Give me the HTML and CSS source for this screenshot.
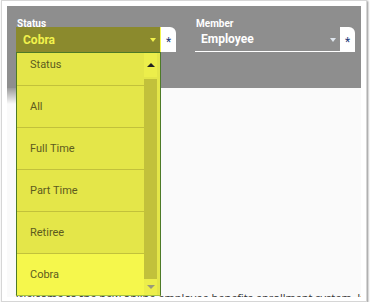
FILE: index.html
```html
<!DOCTYPE html>
<html lang="en">
<head>
    <meta charset="UTF-8">
    <meta name="viewport" content="width=device-width, initial-scale=1.0">
    <title>Enrollment</title>
    <link rel="stylesheet" href="styles.css">
</head>
<body>

<div class="frame">
    <div class="screen">

        <!-- filter bar -->
        <div class="filters">
            <div class="field">
                <label>Status</label>
                <div class="select-row">
                    <div class="select open">
                        <span class="value">Cobra</span>
                        <span class="caret"></span>
                    </div>
                    <span class="required">*</span>
                </div>

                <!-- open dropdown -->
                <div class="dropdown">
                    <div class="options">
                        <div class="option">Status</div>
                        <div class="option">All</div>
                        <div class="option">Full Time</div>
                        <div class="option">Part Time</div>
                        <div class="option">Retiree</div>
                        <div class="option selected">Cobra</div>
                    </div>
                    <div class="scrollbar">
                        <div class="scroll-btn up"><span></span></div>
                        <div class="thumb"></div>
                        <div class="scroll-btn down"><span></span></div>
                    </div>
                </div>
            </div>

            <div class="field">
                <label>Member</label>
                <div class="select-row">
                    <div class="select">
                        <span class="value">Employee</span>
                        <span class="caret"></span>
                    </div>
                    <span class="required">*</span>
                </div>
            </div>
        </div>

        <div class="content">
            <p>Welcome to the new online employee benefits enrollment system. If you have questions</p>
        </div>

    </div>
</div>

</body>
</html>
```

FILE: styles.css
```css
body {
    margin: 0;
    background: #ffffff;
    font-family: Roboto, "Open Sans", Arial, sans-serif;
}
.frame {
    width: 366px;
    height: 302px;
    box-sizing: border-box;
    margin-left: 1px;
    padding: 5px;
    border: 1px solid #d6d6d6;
    background: #ffffff;
    box-shadow: 1px 1px 2px rgba(0,0,0,0.45);
}
.screen {
    height: 291px;
    background: #fafafa;
    overflow: hidden;
    position: relative;
}
.filters {
    height: 82px;
    box-sizing: border-box;
    background: #8e8e8e;
    padding: 13px 0 0 9px;
    display: flex;
    gap: 19px;
    position: relative;
}
/* fading shade left of the open list */
.filters::after {
    content: "";
    position: absolute;
    left: 0;
    top: 82px;
    width: 9px;
    height: 16px;
    background: linear-gradient(#9a9a9a, #fafafa);
}
.field {
    width: 160px;
    position: relative;
}
.field label {
    display: block;
    color: #ffffff;
    font-size: 10px;
    font-weight: bold;
    line-height: 9px;
    height: 8px;
    padding-left: 1px;
}
.select-row {
    display: flex;
    height: 25px;
}
.select {
    flex: 1;
    display: flex;
    align-items: center;
    justify-content: space-between;
    padding: 0 4px 0 6px;
    border-bottom: 1px solid #ffffff;
    color: #ffffff;
    font-size: 12px;
    font-weight: bold;
}
.select.open {
    background: #8b8a2d;
    color: #f2f24c;
    border-bottom: none;
    border-right: 1px solid #f4f64c;
    padding-left: 7px;
}
.caret {
    width: 0;
    height: 0;
    border-left: 3px solid transparent;
    border-right: 3px solid transparent;
    border-top: 4px solid #dfe6ee;
    margin-top: 1px;
}
.select.open .caret {
    border-top-color: #f2f24c;
}
.required {
    width: 15px;
    background: #ffffff;
    border-top-right-radius: 6px;
    color: #1c3b7a;
    font-size: 12px;
    text-align: center;
    line-height: 30px;
}
.dropdown {
    position: absolute;
    left: 0;
    top: 33px;
    width: 145px;
    height: 244px;
    box-sizing: border-box;
    border: 1px solid #4d7a27;
    border-bottom-color: #a6c23e;
    background: #e4e649;
    display: flex;
    padding-right: 3px;
    z-index: 2;
}
.options {
    flex: 1;
    overflow: hidden;
}
.option {
    height: 41px;
    margin-bottom: 1px;
    box-shadow: 0 1px 0 #c2c13b;
    padding-left: 13px;
    display: flex;
    align-items: center;
    color: #5d5b1e;
    font-size: 11px;
}
.option:first-child {
    margin-top: -9px;
}
.option.selected {
    background: #f5f74c;
    box-shadow: none;
}
.scrollbar {
    width: 13px;
    display: flex;
    flex-direction: column;
}
.scroll-btn {
    height: 24px;
    background: #ecee4b;
    display: flex;
    align-items: center;
    justify-content: center;
}
.scroll-btn.down {
    height: 16px;
}
.scroll-btn span {
    width: 0;
    height: 0;
    border-left: 4px solid transparent;
    border-right: 4px solid transparent;
}
.scroll-btn.up span {
    border-bottom: 4px solid #222222;
}
.scroll-btn.down span {
    border-top: 4px solid #9a9a7a;
}
.thumb {
    flex: 1;
    margin-top: 2px;
    background: #c2c13b;
}
.content {
    padding: 0 9px;
}
.content p {
    margin: 202px 0 0;
    white-space: nowrap;
    font-family: "Open Sans", Arial, sans-serif;
    font-size: 11px;
    color: #333333;
}
```
